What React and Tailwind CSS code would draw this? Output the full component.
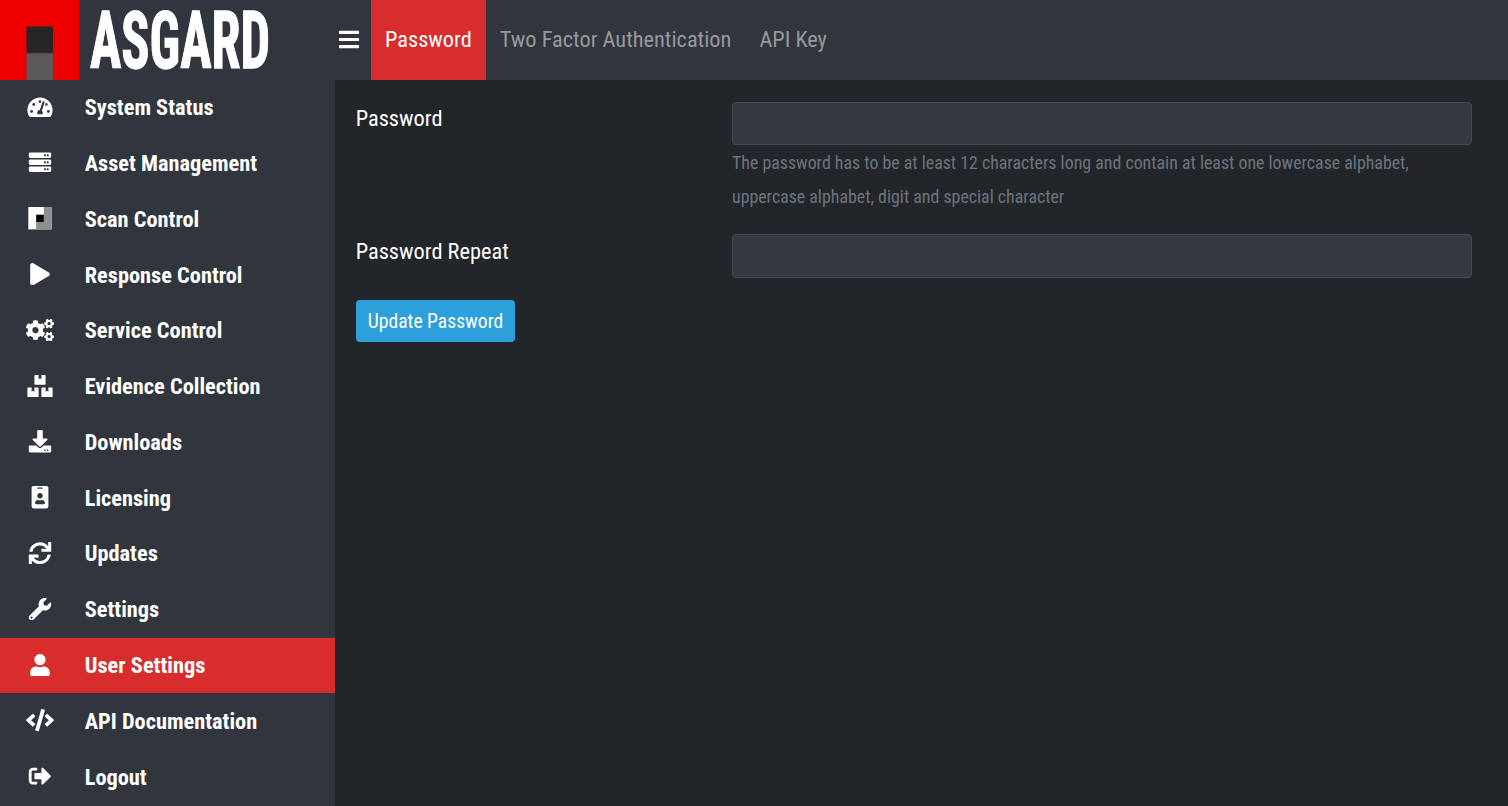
import React from "react";
import {
  FaTachometerAlt, FaServer, FaPlay, FaCogs, FaBoxes, FaDownload, FaIdBadge,
  FaSync, FaWrench, FaUser, FaCode, FaSignOutAlt, FaBars,
} from "react-icons/fa";

function ScanIcon({ className }) {
  return (
    <svg className={className} viewBox="0 0 28 23">
      <rect x="2" y="0" width="24" height="23" fill="#fff" />
      <path d="M18 0h8v23H10V8h8z" fill="#8f8f8f" />
      <rect x="10.2" y="8" width="7.6" height="7.4" fill="#000" />
    </svg>
  );
}

const items = [
  ["System Status", FaTachometerAlt],
  ["Asset Management", FaServer],
  ["Scan Control", ScanIcon],
  ["Response Control", FaPlay],
  ["Service Control", FaCogs],
  ["Evidence Collection", FaBoxes],
  ["Downloads", FaDownload],
  ["Licensing", FaIdBadge],
  ["Updates", FaSync],
  ["Settings", FaWrench],
  ["User Settings", FaUser],
  ["API Documentation", FaCode],
  ["Logout", FaSignOutAlt],
];

const tabs = ["Password", "Two Factor Authentication", "API Key"];

function Logo() {
  return (
    <svg className="block h-20 w-[280px] overflow-visible" viewBox="0 0 280 80">
      <rect width="79.5" height="80" fill="#ee0000" />
      <rect x="26.5" y="26.5" width="26.5" height="27" fill="#262626" />
      <rect x="26.5" y="53.3" width="26.5" height="26.7" fill="#595959" />
      <text x="90" y="68" fontSize="80" fontWeight="700" fill="#fff" stroke="#fff" strokeWidth="1.3" textLength="180" lengthAdjust="spacingAndGlyphs">
        ASGARD
      </text>
    </svg>
  );
}

export default function App() {
  return (
    <div className="flex h-[806px] w-full overflow-hidden bg-[#22252a] font-['Roboto_Condensed',Roboto,sans-serif] text-[22.35px] text-white [font-stretch:75%]">
      <aside className="w-[335px] shrink-0 bg-[#31353d]">
        <Logo />
        <nav className="-mt-[0.4px]">
          {items.map(([label, Icon]) => (
            <a
              key={label}
              className={`flex h-[55.8px] items-center pb-[0.8px] pl-[25.7px] font-bold leading-[34px] ${label === "User Settings" ? "bg-[#d92c2c]" : ""}`}
            >
              <Icon className="mr-[31px] mb-[0.6px] h-[22.4px] w-7 shrink-0" />
              <span>{label}</span>
            </a>
          ))}
        </nav>
      </aside>
      <main className="min-w-0 flex-1">
        <header className="flex h-20 items-center bg-[#31353d]">
          <FaBars className="mb-[2px] ml-[3px] mr-[11px] h-[23px] w-[22px]" />
          {tabs.map((t, i) => (
            <a
              key={t}
              className={`flex h-20 items-center px-[14px] ${i === 0 ? "bg-[#d92c2c] text-white" : "text-[#97999c]"}`}
            >
              {t}
            </a>
          ))}
        </header>
        <form className="pl-[21px] pr-9 pt-[22px]">
          <div className="flex">
            <label className="-ml-[0.3px] w-[376.3px] shrink-0 leading-[33px]">Password</label>
            <div className="flex-1">
              <input type="password" className="block h-[43px] w-full rounded border border-[#434c53] bg-[#353941]" />
              <p className="mt-px text-[17.87px] leading-[33.6px] text-[#6c757d]">
                The password has to be at least 12 characters long and contain at least one lowercase alphabet, uppercase alphabet, digit and special character
              </p>
            </div>
          </div>
          <div className="mt-[21px] flex">
            <label className="-ml-[0.3px] w-[376.3px] shrink-0 leading-[35px]">Password Repeat</label>
            <input type="password" className="block h-11 min-w-0 flex-1 rounded border border-[#434c53] bg-[#353941]" />
          </div>
          <button type="button" className="mt-[22px] block h-[42px] w-[159px] whitespace-nowrap rounded bg-[#2d9fda] pt-[2px] text-[19.6px]">
            Update Password
          </button>
        </form>
      </main>
    </div>
  );
}
